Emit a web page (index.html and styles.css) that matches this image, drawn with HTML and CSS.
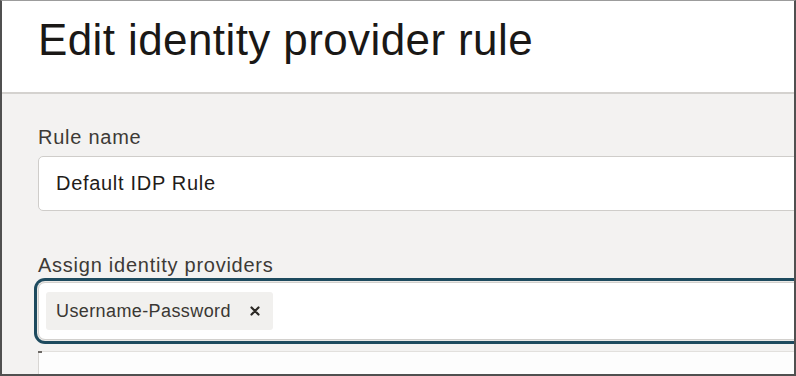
FILE: index.html
```html
<!DOCTYPE html>
<html lang="en">
<head>
<meta charset="utf-8">
<title>Edit identity provider rule</title>
<link rel="stylesheet" href="styles.css">
</head>
<body>
<div class="frame">
  <header class="header">
    <h1 class="title">Edit identity provider rule</h1>
  </header>
  <main class="body">
    <div class="field">
      <label class="label">Rule name</label>
      <div class="input">Default IDP Rule</div>
    </div>
    <div class="field field-second">
      <label class="label label-tight">Assign identity providers</label>
      <div class="input input-focus">
        <span class="chip">
          <span class="chip-text">Username-Password</span>
          <svg class="chip-x" width="10" height="10" viewBox="0 0 10 10" aria-hidden="true">
            <path d="M1.5 1.5 L8.5 8.5 M8.5 1.5 L1.5 8.5" stroke="#2b2824" stroke-width="2.2" stroke-linecap="round"/>
          </svg>
        </span>
      </div>
      <div class="dropdown"></div>
    </div>
  </main>
</div>
</body>
</html>
```
FILE: styles.css
```css
html, body {
  margin: 0;
  padding: 0;
  background: #ffffff;
}
.frame {
  width: 796px;
  height: 376px;
  box-sizing: border-box;
  border-top: 1px solid #9c9c9c;
  border-left: 2px solid #505050;
  border-right: 2px solid #505050;
  border-bottom: 2px solid #505050;
  overflow: hidden;
  display: flex;
  flex-direction: column;
  font-family: "Liberation Sans", Arial, sans-serif;
  background: #f3f2f1;
}
.header {
  background: #ffffff;
  flex: none;
  border-bottom: 2px solid #d4d2cf;
  box-sizing: border-box;
  height: 93px;
  padding: 15px 0 0 36px;
}
.title {
  margin: 0;
  font-size: 44px;
  line-height: 48px;
  font-weight: 400;
  color: #1a1816;
  letter-spacing: 0.4px;
}
.body {
  flex: 1;
  padding: 31px 0 0 36px;
  width: 900px;
}
.field {
  display: flex;
  flex-direction: column;
}
.field-second {
  margin-top: 42px;
}
.label {
  font-size: 20px;
  line-height: 24px;
  color: #3d3a36;
  margin-bottom: 7px;
  letter-spacing: 0.75px;
}
.label-tight {
  margin-bottom: 5px;
}
.input {
  height: 55px;
  box-sizing: border-box;
  background: #ffffff;
  border: 1px solid #cfcdca;
  border-radius: 5px;
  display: flex;
  align-items: center;
  padding-left: 17px;
  font-size: 20px;
  color: #1f1c19;
  letter-spacing: 0.7px;
}
.input-focus {
  height: 58px;
  padding-left: 7px;
  border-color: #d2d0cd;
  box-shadow: 0 0 0 1px #ebe9e6, 0 0 0 4px #1d4a5e;
  border-radius: 7px;
}
.chip {
  display: flex;
  align-items: center;
  height: 38px;
  padding: 0 13px 0 10px;
  background: #f1f0ee;
  border-radius: 3px;
  font-size: 18px;
  color: #3a3733;
  letter-spacing: 0.4px;
}
.chip-x {
  margin-left: 19px;
}
.dropdown {
  margin-top: 11px;
  height: 40px;
  background: #fdfdfd;
  border-top: 1px solid #e2e0dd;
  border-left: 1px solid #d8d6d3;
  position: relative;
}
.dropdown::before {
  content: "";
  position: absolute;
  top: -1px;
  left: -1px;
  width: 4px;
  height: 2px;
  background: #6b6864;
}
```
